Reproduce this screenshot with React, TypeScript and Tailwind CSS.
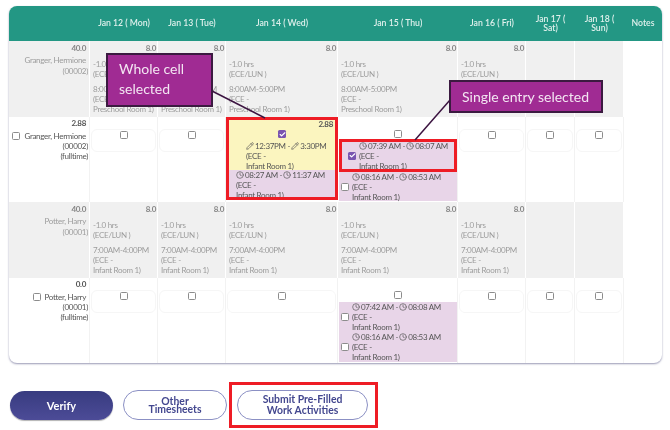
import { Check, Clock, Pencil } from "lucide-react";

const font = { fontFamily: 'Lato, "Noto Sans", sans-serif' };

function Box({ checked = false }: { checked?: boolean }) {
  return checked ? (
    <span className="flex h-[8px] w-[8px] shrink-0 items-center justify-center rounded-[1.5px] bg-[#7a55b0]">
      <Check size={7} strokeWidth={4} color="white" />
    </span>
  ) : (
    <span className="block h-[8px] w-[8px] shrink-0 rounded-[1.5px] border border-[#8c8c8c] bg-white" />
  );
}

function Sched({ hours, time, room }: { hours?: string; time?: string; room?: string }) {
  return (
    <div className="h-full border-r border-white bg-[#f0f0f0] pl-[3px] pr-[1px] pt-[2px] text-[#9c9c9c]">
      {hours && <div className="text-right font-bold text-[#868686]">{hours}</div>}
      {time && (
        <>
          <div className="mt-[6px]">-1.0 hrs</div>
          <div>(ECE/LUN )</div>
          <div className="mt-[5px] whitespace-nowrap">{time}</div>
          <div>(ECE -</div>
          <div className="whitespace-nowrap">{room}</div>
        </>
      )}
    </div>
  );
}

function EmptyCell() {
  return (
    <div className="flex h-full flex-col border-r border-[#f2f2f2]">
      <div className="h-[12px]" />
      <div className="mx-[1px] flex h-[23px] justify-center rounded-[6px] border border-[#f6f6f6] pt-[1px]">
        <Box />
      </div>
    </div>
  );
}

function TimeLine({ from, to, pencil }: { from: string; to: string; pencil?: boolean }) {
  const Icon = pencil ? Pencil : Clock;
  return (
    <div className="flex items-center gap-[1px] whitespace-nowrap">
      <Icon size={8} strokeWidth={2} /> <span>{from} - </span><Icon size={8} strokeWidth={2} /> <span>{to}</span>
    </div>
  );
}

function Entry({ from, to, checked, pad = "pl-[2px]", outlined, height = "h-[30px]" }: {
  from: string; to: string; checked?: boolean; pad?: string; outlined?: boolean; height?: string;
}) {
  return (
    <div className={`relative flex items-center bg-[#e8d5e8] ${height} ${pad} ${outlined ? "z-10 -mt-[2px] outline-[3px] -outline-offset-[3px] outline-[#ee1c25]" : ""}`}>
      <span className="mr-[3px]"><Box checked={checked} /></span>
      <div className="text-[#555]">
        <TimeLine from={from} to={to} />
        <div>(ECE -</div>
        <div className="whitespace-nowrap">Infant Room 1)</div>
      </div>
    </div>
  );
}

function NameCell({ hours, name, id }: { hours: string; name: string; id: string }) {
  return (
    <div className="h-full border-r border-[#f2f2f2] pr-[1px] pt-[1px] text-right text-[#555]">
      <div className="pr-[2px] font-bold">{hours}</div>
      <div className="mt-[3px] flex items-center justify-end pr-[2px]">
        <span className="mr-[4px]"><Box /></span>
        <span className="whitespace-nowrap">{name}</span>
      </div>
      <div>({id})</div>
      <div>(fulltime)</div>
    </div>
  );
}

function GreyName({ name, id }: { name: string; id: string }) {
  return (
    <div className="h-full border-r border-white bg-[#f0f0f0] pr-[1px] pt-[2px] text-right leading-[11.5px] text-[#9c9c9c]">
      <div className="pr-[2px] font-bold text-[#868686]">40.0</div>
      <div className="whitespace-nowrap pr-[2px]">{name}</div>
      <div>({id})</div>
    </div>
  );
}

const heads = ["Jan 12 ( Mon)", "Jan 13 ( Tue)", "Jan 14 ( Wed)", "Jan 15 ( Thu)", "Jan 16 ( Fri)", "Jan 17 ( Sat)", "Jan 18 ( Sun)", "Notes"];

function ScheduleRow({ name, id, time, room }: { name: string; id: string; time: string; room: string }) {
  return (
    <>
      <GreyName name={name} id={id} />
      {[0, 1, 2, 3, 4].map((i) => (
        <Sched key={i} hours="8.0" time={time} room={room} />
      ))}
      <Sched />
      <Sched />
      <div />
    </>
  );
}

export default function App() {
  return (
    <div className="relative h-[430px] w-[670px] overflow-hidden bg-white pl-[9px] pt-[6px] blur-[0.3px]" style={font}>
      <div className="w-[653px] overflow-hidden rounded-[8px] shadow-[0_1px_2px_rgba(70,70,120,0.55)]">
        <div className="grid grid-cols-[81px_68px_68px_112px_120px_68px_49px_49px_38px] grid-rows-[35px_76px_85px_76px_85px] text-[8px] leading-[10px] tracking-[-0.3px]">
          <div className="bg-[#239784]" />
          {heads.map((h) => (
            <div key={h} className="flex items-center justify-center bg-[#239784] px-[4px] text-center text-[8.7px] font-semibold leading-[8.5px] tracking-normal text-[#dff0ec]">
              {h}
            </div>
          ))}

          <ScheduleRow name="Granger, Hermione" id="00002" time="8:00AM-5:00PM" room="Preschool Room 1)" />

          <NameCell hours="2.88" name="Granger, Hermione" id="00002" />
          <EmptyCell />
          <EmptyCell />
          <div className="relative z-10 h-[83px] overflow-hidden outline-[3px] -outline-offset-[3px] outline-[#ee1c25]">
            <div className="h-[53px] bg-[#fbf5bf] pt-[2px] text-[#555]">
              <div className="pr-[5px] text-right font-bold">2.88</div>
              <div className="mt-[1px] flex justify-center"><Box checked /></div>
              <div className="pl-[20px] pt-[3px]">
                <TimeLine from="12:37PM" to="3:30PM" pencil />
                <div>(ECE -</div>
                <div>Infant Room 1)</div>
              </div>
            </div>
            <div className="bg-[#e8d5e8] pl-[10px] text-[#555]">
              <TimeLine from="08:27 AM" to="11:37 AM" />
              <div>(ECE -</div>
              <div>Infant Room 1)</div>
            </div>
          </div>
          <div className="h-full border-r border-[#f2f2f2] pl-[1px]">
            <div className="flex h-[24px] justify-center pt-[13px]"><Box /></div>
            <Entry from="07:39 AM" to="08:07 AM" checked pad="pl-[9px]" outlined height="h-[33px]" />
            <Entry from="08:16 AM" to="08:53 AM" height="h-[29px]" />
          </div>
          <EmptyCell />
          <EmptyCell />
          <EmptyCell />
          <div />

          <ScheduleRow name="Potter, Harry" id="00001" time="7:00AM-4:00PM" room="Infant Room 1)" />

          <NameCell hours="0.0" name="Potter, Harry" id="00001" />
          <EmptyCell />
          <EmptyCell />
          <EmptyCell />
          <div className="h-full border-r border-[#f2f2f2] pl-[1px]">
            <div className="flex h-[24px] justify-center pt-[13px]"><Box /></div>
            <Entry from="07:42 AM" to="08:08 AM" />
            <Entry from="08:16 AM" to="08:53 AM" />
          </div>
          <EmptyCell />
          <EmptyCell />
          <EmptyCell />
          <div />
        </div>
      </div>

      <div className="mt-[19px] flex items-center pl-[1px] text-[10.4px] font-bold leading-[11px]">
        <button className="h-[29px] w-[103px] rounded-full bg-gradient-to-b from-[#383c80] to-[#4c4b97] text-[11px] text-white shadow-[0_1px_1px_rgba(0,0,0,0.3)]">
          Verify
        </button>
        <button className="ml-[10px] h-[30px] w-[104px] rounded-full border border-[#8b90c4] bg-white text-center leading-[8.5px] text-[#43478f]">
          Other<br />Timesheets
        </button>
        <div className="ml-[2px] flex h-[46px] items-center border-[3px] border-[#ee1c25] pl-[5px] pr-[7px]">
          <button className="h-[30px] w-[131px] rounded-full border border-[#8b90c4] bg-white text-center text-[#43478f]">
            Submit Pre-Filled<br />Work Activities
          </button>
        </div>
      </div>

      <svg className="pointer-events-none absolute left-0 top-0 z-20" width="670" height="430">
        <line x1="212" y1="91" x2="265" y2="118" stroke="#3b1340" strokeWidth="1.5" />
        <line x1="450" y1="100" x2="415" y2="140" stroke="#3b1340" strokeWidth="1.5" />
      </svg>
      <div className="absolute left-[106px] top-[53px] z-20 h-[54px] w-[107px] border-2 border-[#3b1a40] bg-[#a02b93] pl-[11px] pt-[4px] text-[14px] leading-[20px] text-[#f3e6f2]">
        Whole cell<br />selected
      </div>
      <div className="absolute left-[449px] top-[80px] z-20 flex h-[33px] w-[154px] items-center whitespace-nowrap border-2 border-[#3b1a40] bg-[#a02b93] pl-[11px] text-[14px] text-[#f3e6f2]">
        Single entry selected
      </div>
    </div>
  );
}
